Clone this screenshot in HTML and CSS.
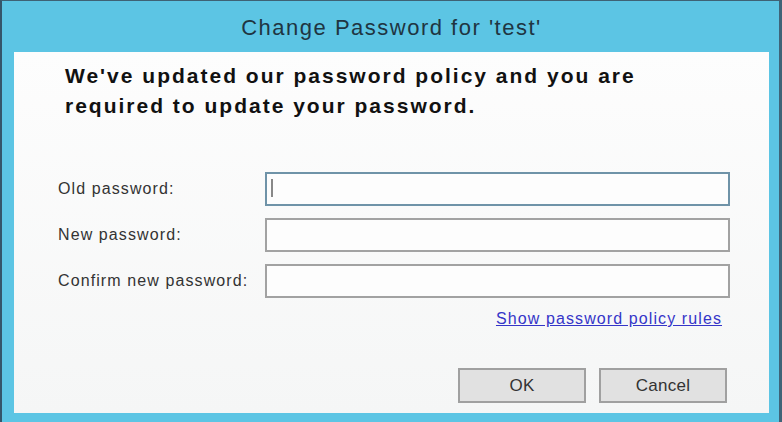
FILE: index.html
```html
<!DOCTYPE html>
<html lang="en">
<head>
  <meta charset="UTF-8">
  <title>Change Password</title>
  <link rel="stylesheet" href="styles.css">
</head>
<body>

<div class="window">
  <div class="titlebar">Change Password for 'test'</div>

  <div class="content">
    <p class="notice">We've updated our password policy and you are<br>required to update your password.</p>

    <div class="form">
      <label for="oldPw">Old password:</label>
      <div class="field focused" id="oldPw"><span class="caret"></span></div>

      <label for="newPw">New password:</label>
      <div class="field" id="newPw"></div>

      <label for="confirmPw">Confirm new password:</label>
      <div class="field" id="confirmPw"></div>
    </div>

    <div class="link-row">
      <a href="#">Show password policy rules</a>
    </div>

    <div class="buttons">
      <button>OK</button>
      <button>Cancel</button>
    </div>
  </div>
</div>

</body>
</html>
```

FILE: styles.css
```css
body {
  margin: 0;
  padding: 0;
  font-family: 'Liberation Sans', Arial, sans-serif;
}

.window {
  width: 782px;
  height: 422px;
  box-sizing: border-box;
  background: #5cc5e4;
  border-top: 1px solid #3e6275;
  border-left: 2px solid #35566a;
  border-right: 3px solid #3f6478;
  padding: 0 10px 9px 12px;
  display: flex;
  flex-direction: column;
}

.titlebar {
  height: 51px;
  display: flex;
  align-items: center;
  justify-content: center;
  font-size: 22px;
  letter-spacing: 1.5px;
  color: #1f3542;
  padding-top: 3px;
  box-sizing: border-box;
}

.content {
  flex: 1;
  background: linear-gradient(#fdfdfd, #f5f6f6);
  padding: 9px 42px 0 44px;
  display: flex;
  flex-direction: column;
}

.notice {
  margin: 0 0 0 7px;
  font-size: 21px;
  font-weight: bold;
  letter-spacing: 2px;
  line-height: 30px;
  color: #111;
}

.form {
  display: grid;
  grid-template-columns: 207px 465px;
  row-gap: 12px;
  margin-top: 51px;
  align-items: center;
}

label {
  font-size: 16px;
  letter-spacing: 1.1px;
  color: #333;
}

.field {
  height: 34px;
  box-sizing: border-box;
  border: 2px solid #a2a2a2;
  background: #fdfdfd;
  position: relative;
}

.field.focused {
  border-color: #6f93a8;
}

.caret {
  position: absolute;
  left: 4px;
  top: 5px;
  width: 2px;
  height: 18px;
  background: #888;
}

.link-row {
  width: 672px;
  display: flex;
  justify-content: flex-end;
  margin-top: 12px;
}

.link-row a {
  font-size: 16px;
  letter-spacing: 1.1px;
  color: #3535c8;
  margin-right: 8px;
}

.buttons {
  display: flex;
  justify-content: flex-end;
  gap: 13px;
  margin-top: 40px;
}

button {
  width: 128px;
  height: 35px;
  background: #e1e1e1;
  border: 2px solid #a0a0a0;
  font-family: 'Liberation Sans', Arial, sans-serif;
  font-size: 17px;
  letter-spacing: 0.3px;
  color: #333;
}
```
